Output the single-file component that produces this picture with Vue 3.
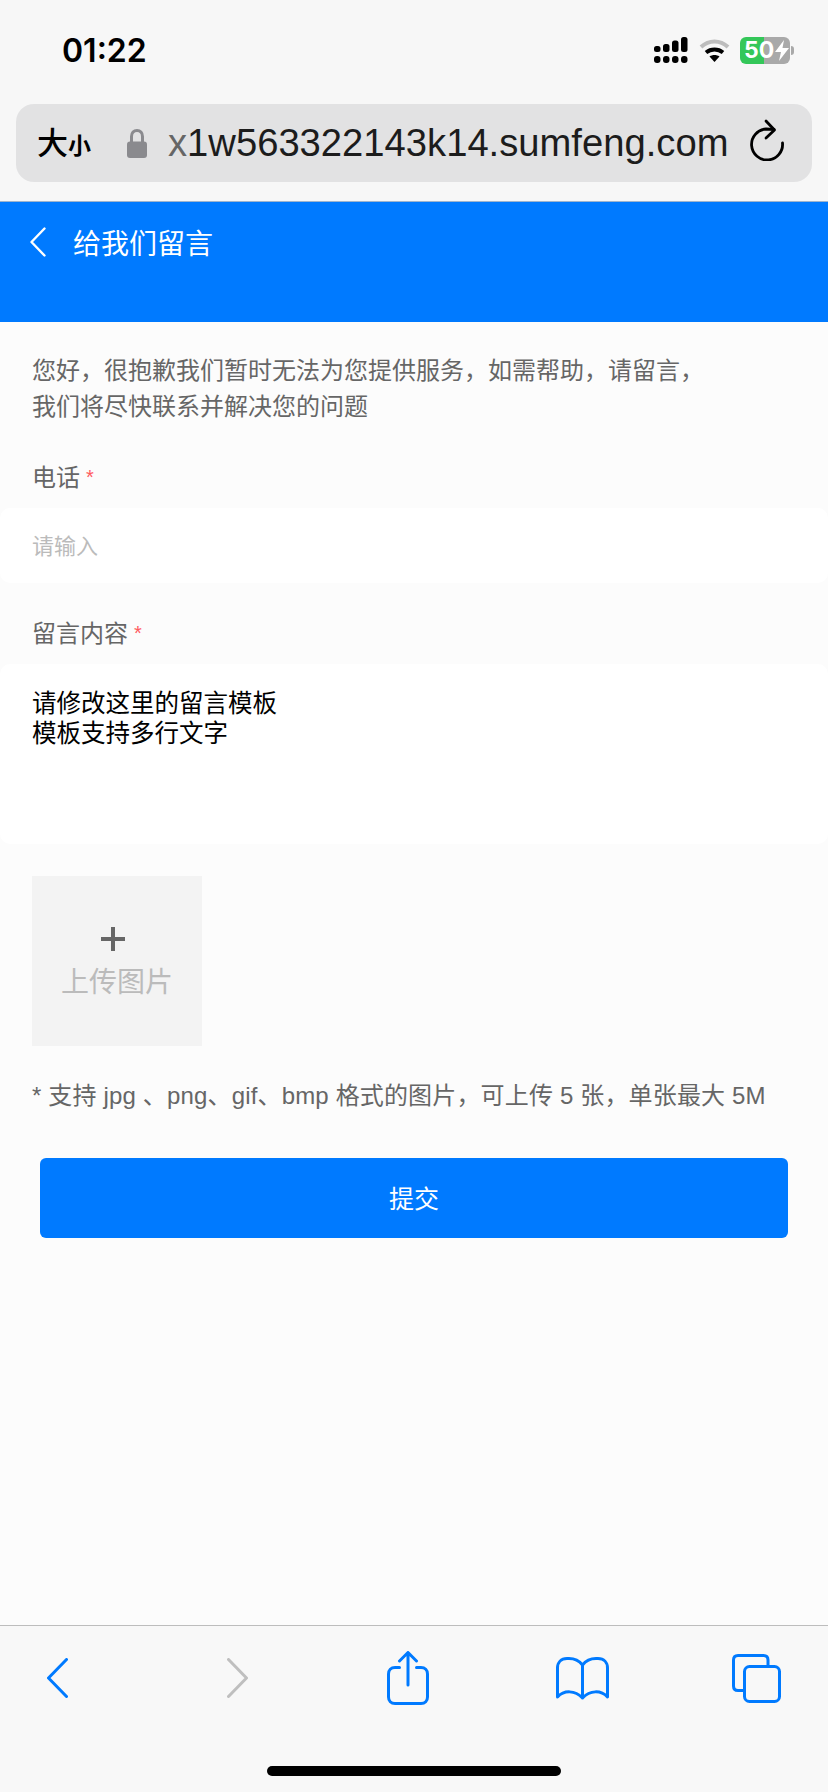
<script setup>
import { ref } from "vue";

const phone = ref("");
const message = ref("请修改这里的留言模板\n模板支持多行文字");
</script>

<template>
  <div class="page">
    <header class="browser-top">
      <div class="status">
        <span class="time">01:22</span>
        <div class="status-icons">
          <svg width="34" height="27" viewBox="0 0 34 27" fill="#000">
            <rect x="0" y="9" width="6.500" height="6" rx="2.500" />
            <rect x="9" y="7" width="6.500" height="8" rx="2.500" />
            <rect x="18" y="3.500" width="6.500" height="11.500" rx="2.500" />
            <rect x="27" y="0" width="6.500" height="15" rx="2.500" />
            <rect x="0" y="19" width="6.500" height="7" rx="3" />
            <rect x="9" y="19" width="6.500" height="7" rx="3" />
            <rect x="18" y="19" width="6.500" height="7" rx="3" />
            <rect x="27" y="19" width="6.500" height="7" rx="3" />
          </svg>
          <svg class="wifi" width="31" height="23" viewBox="0 0 31 23" fill="none">
            <path d="M2 8C10 0.500 21 0.500 29 8" stroke="#bdbdbd" stroke-width="4" />
            <path d="M7 13.500C12 9.500 19 9.500 24 13.500" stroke="#000" stroke-width="4" />
            <path d="M10.500 17.500C13.500 15.500 17.500 15.500 20.500 17.500L15.500 23Z" fill="#000" />
          </svg>
          <div class="battery">
            <span class="battery-level">50</span>
            <svg width="14" height="21" viewBox="0 0 14 21" fill="#fff">
              <path d="M9 0L0 12H6L4 21L14 8H7.500Z" />
            </svg>
          </div>
          <span class="battery-cap"></span>
        </div>
      </div>
      <div class="address">
        <span class="text-size">大<small>小</small></span>
        <svg class="lock" width="20" height="29" viewBox="0 0 20 29" fill="none">
          <path d="M4.500 14V7.500C4.500 3.800 6.800 1.500 10 1.500S15.500 3.800 15.500 7.500V14" stroke="#8a8a8e" stroke-width="3" />
          <rect x="0" y="12.500" width="20" height="16.500" rx="3" fill="#8a8a8e" />
        </svg>
        <span class="url"><span class="url-first">x</span>1w563322143k14.sumfeng.com</span>
        <svg class="reload" width="36" height="42" viewBox="0 0 36 42" fill="none" stroke="#000" stroke-width="2.800" stroke-linecap="round" stroke-linejoin="round">
          <path d="M33.500 24A15.500 15.500 0 1 1 17 10L25 10.500" />
          <path d="M17 2L25.500 11L17 19" />
        </svg>
      </div>
    </header>

    <main class="content">
      <div class="title-bar">
        <svg width="16" height="30" viewBox="0 0 16 30" fill="none" stroke="#fff" stroke-width="2.400" stroke-linecap="round" stroke-linejoin="round">
          <path d="M14.500 1.500L1.500 15L14.500 28.500" />
        </svg>
        <h1>给我们留言</h1>
      </div>

      <p class="intro">您好，很抱歉我们暂时无法为您提供服务，如需帮助，请留言，<br />我们将尽快联系并解决您的问题</p>

      <form class="form" @submit.prevent>
        <label class="field-label">电话<em>*</em></label>
        <input v-model="phone" class="input" placeholder="请输入" />

        <label class="field-label second">留言内容<em>*</em></label>
        <textarea v-model="message" class="textarea"></textarea>

        <div class="upload">
          <span class="plus"></span>
          <span class="upload-text">上传图片</span>
        </div>
        <p class="hint">* 支持 jpg 、png、gif、bmp 格式的图片，可上传 5 张，单张最大 5M</p>

        <button class="submit" type="submit">提交</button>
      </form>
    </main>

    <footer class="browser-bottom">
      <div class="toolbar">
        <svg width="21" height="40" viewBox="0 0 21 40" fill="none" stroke="#007aff" stroke-width="3" stroke-linecap="round" stroke-linejoin="round">
          <path d="M19.500 1.500L1.500 20L19.500 38.500" />
        </svg>
        <svg width="21" height="40" viewBox="0 0 21 40" fill="none" stroke="#bfbfbf" stroke-width="3" stroke-linecap="round" stroke-linejoin="round">
          <path d="M1.500 1.500L19.500 20L1.500 38.500" />
        </svg>
        <svg width="42" height="54" viewBox="0 0 42 54" fill="none" stroke="#007aff" stroke-width="3" stroke-linecap="round" stroke-linejoin="round">
          <path d="M12.500 16.500H8C4 16.500 1.500 19 1.500 23V46C1.500 50 4 52.500 8 52.500H34C38 52.500 40.500 50 40.500 46V23C40.500 19 38 16.500 34 16.500H29.500" />
          <path d="M21 34V1.500M12.500 10L21 1.500L29.500 10" />
        </svg>
        <svg width="53" height="43" viewBox="0 0 53 43" fill="none" stroke="#007aff" stroke-width="3" stroke-linecap="round" stroke-linejoin="round">
          <path d="M26.500 8C23 3.500 18 1.500 13 1.500H11C5 1.500 1.500 5.500 1.500 11V40C8 33 19 33 26.500 41C34 33 45 33 51.500 40V11C51.500 5.500 48 1.500 42 1.500H40C35 1.500 30 3.500 26.500 8V41" />
        </svg>
        <svg width="49" height="49" viewBox="0 0 49 49" fill="none" stroke="#007aff" stroke-width="3" stroke-linejoin="round">
          <path d="M36 12V6C36 3 34.500 1.500 31.500 1.500H6C3 1.500 1.500 3 1.500 6V32C1.500 35 3 36.500 6 36.500H12" />
          <rect x="12.500" y="12.500" width="35" height="35" rx="5" />
        </svg>
      </div>
      <div class="home-indicator"></div>
    </footer>
  </div>
</template>

<style scoped>
.page {
  width: 828px;
  height: 1792px;
  display: flex;
  flex-direction: column;
  overflow: hidden;
  background: #fcfcfc;
  font-family: "Liberation Sans", "Noto Sans CJK SC", sans-serif;
}

.browser-top {
  height: 201px;
  flex: none;
  background: #f7f7f7;
  border-bottom: 1px solid #9fb4cc;
}

.status {
  height: 104px;
  padding: 12px 34px 16px 62px;
  box-sizing: border-box;
  display: flex;
  justify-content: space-between;
  align-items: center;
}

.time {
  font-family: Inter, sans-serif;
  font-size: 32px;
  font-weight: 600;
  color: #000;
}

.status-icons {
  display: flex;
  align-items: center;
}

.wifi {
  margin: 0 10px 0 11px;
}

.battery {
  width: 50px;
  height: 27px;
  border-radius: 6px;
  padding-left: 4px;
  box-sizing: border-box;
  display: flex;
  align-items: center;
  gap: 1px;
  background: linear-gradient(90deg, #34c759 48%, #a9a9a9 48%);
}

.battery-level {
  font-family: Inter, sans-serif;
  font-size: 23px;
  font-weight: 700;
  color: #fff;
}

.battery-cap {
  width: 3px;
  height: 9px;
  margin-left: 1px;
  border-radius: 0 3px 3px 0;
  background: #a9a9a9;
}

.address {
  height: 78px;
  margin: 0 16px;
  padding: 0 27px 0 21px;
  border-radius: 18px;
  display: flex;
  align-items: center;
  background: #e2e2e3;
}

.text-size {
  width: 90px;
  margin-bottom: 6px;
  font-size: 31px;
  font-weight: 500;
  color: #000;
}

.text-size small {
  font-size: 23px;
  font-weight: 700;
}

.lock {
  flex: none;
}

.url {
  margin-left: 21px;
  font-size: 38.200px;
  white-space: nowrap;
  color: #1c1c1c;
}

.url-first {
  color: #666;
}

.reload {
  margin: 0 0 6px auto;
  flex: none;
}

.content {
  flex: 1;
  min-height: 0;
}

.title-bar {
  height: 120px;
  padding: 25px 30px 0;
  box-sizing: border-box;
  display: flex;
  align-items: flex-start;
  gap: 27px;
  background: #007aff;
  color: #fff;
}

.title-bar svg {
  flex: none;
}

.title-bar h1 {
  margin: 2px 0 0;
  font-size: 28px;
  line-height: 32px;
  font-weight: 400;
}

.intro {
  margin: 31px 32px 0;
  font-size: 24px;
  line-height: 36px;
  color: #666;
}

.form {
  display: flex;
  flex-direction: column;
}

.field-label {
  margin: 33px 32px 10px;
  font-size: 24px;
  line-height: 40px;
  color: #666;
}

.field-label.second {
  margin-top: 31px;
  margin-bottom: 10px;
}

.field-label em {
  margin-left: 6px;
  font-style: normal;
  font-size: 20px;
  line-height: 1;
  color: #ff5a5f;
  vertical-align: 2px;
}

.input,
.textarea {
  display: block;
  width: 100%;
  box-sizing: border-box;
  border: 0;
  outline: 0;
  border-radius: 10px;
  background: #fff;
  font-family: inherit;
  color: #000;
}

.input {
  height: 75px;
  padding: 2px 32px 0;
  font-size: 22px;
}

.input::placeholder {
  color: #bbb;
  opacity: 1;
}

.textarea {
  height: 180px;
  padding: 25px 32px 20px;
  font-size: 24.500px;
  line-height: 30px;
  resize: none;
}

.upload {
  width: 170px;
  height: 170px;
  margin: 32px 0 0 32px;
  display: flex;
  flex-direction: column;
  align-items: center;
  background: #f3f3f3;
}

.plus {
  width: 24px;
  height: 24px;
  margin: 51px 8px 0 0;
  background:
    linear-gradient(#666, #666) center / 24px 4px no-repeat,
    linear-gradient(#666, #666) center / 4px 24px no-repeat;
}

.upload-text {
  margin-top: 12px;
  font-size: 28px;
  line-height: 40px;
  color: #bbb;
}

.hint {
  margin: 32px 32px 0;
  font-size: 24px;
  line-height: 36px;
  letter-spacing: 0.160px;
  white-space: nowrap;
  color: #666;
}

.submit {
  height: 80px;
  margin: 44px 40px 0;
  padding: 0 0 2px;
  border: 0;
  border-radius: 6px;
  background: #007aff;
  font-family: inherit;
  font-size: 25px;
  color: #fff;
}

.browser-bottom {
  height: 167px;
  flex: none;
  position: relative;
  border-top: 1px solid #bdbdbd;
  box-sizing: border-box;
  background: #f8f8f8;
}

.toolbar {
  height: 54px;
  padding: 25px 0 0 47px;
  display: grid;
  grid-template-columns: 180px 160px 169px 176px auto;
  align-items: center;
}

.home-indicator {
  position: absolute;
  left: 267px;
  bottom: 16px;
  width: 294px;
  height: 10px;
  border-radius: 5px;
  background: #000;
}
</style>

<style>
html,
body {
  margin: 0;
  background: #fcfcfc;
}
</style>
